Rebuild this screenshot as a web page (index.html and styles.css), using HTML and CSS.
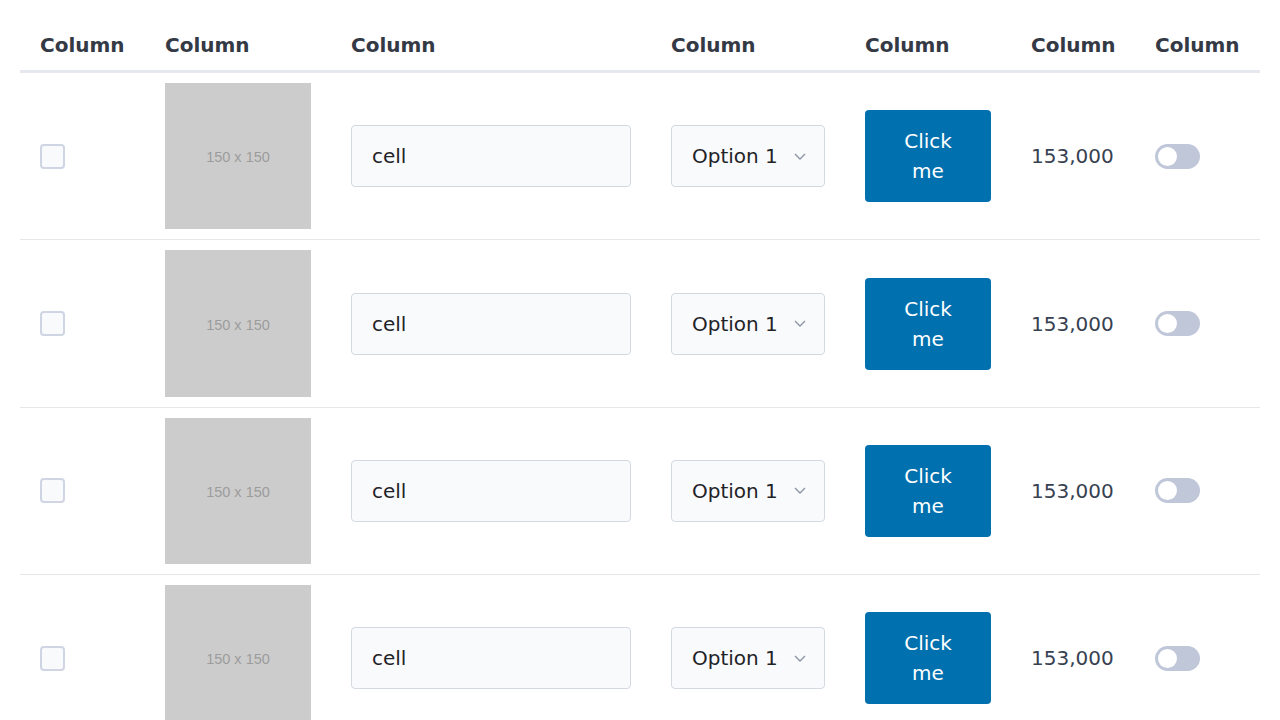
FILE: index.html
```html
<!DOCTYPE html>
<html lang="en">
<head>
<meta charset="utf-8">
<title>Table</title>
<link rel="stylesheet" href="styles.css">
</head>
<body>
<table class="grid">
  <colgroup>
    <col class="c1"><col class="c2"><col class="c3"><col class="c4"><col class="c5"><col class="c6"><col class="c7">
  </colgroup>
  <thead>
    <tr>
      <th>Column</th><th>Column</th><th>Column</th><th>Column</th><th>Column</th><th>Column</th><th>Column</th>
    </tr>
  </thead>
  <tbody>
    <tr>
      <td><span class="check"></span></td>
      <td><div class="thumb">150 x 150</div></td>
      <td><div class="input">cell</div></td>
      <td><div class="select"><span>Option 1</span><svg class="chev" width="12" height="7" viewBox="0 0 12 7"><path d="M1 1l5 5 5-5" fill="none" stroke="#8a93a6" stroke-width="1.3"/></svg></div></td>
      <td><div class="btn">Click me</div></td>
      <td class="num">153,000</td>
      <td><span class="toggle"><span class="knob"></span></span></td>
    </tr>
    <tr>
      <td><span class="check"></span></td>
      <td><div class="thumb">150 x 150</div></td>
      <td><div class="input">cell</div></td>
      <td><div class="select"><span>Option 1</span><svg class="chev" width="12" height="7" viewBox="0 0 12 7"><path d="M1 1l5 5 5-5" fill="none" stroke="#8a93a6" stroke-width="1.3"/></svg></div></td>
      <td><div class="btn">Click me</div></td>
      <td class="num">153,000</td>
      <td><span class="toggle"><span class="knob"></span></span></td>
    </tr>
    <tr>
      <td><span class="check"></span></td>
      <td><div class="thumb">150 x 150</div></td>
      <td><div class="input">cell</div></td>
      <td><div class="select"><span>Option 1</span><svg class="chev" width="12" height="7" viewBox="0 0 12 7"><path d="M1 1l5 5 5-5" fill="none" stroke="#8a93a6" stroke-width="1.3"/></svg></div></td>
      <td><div class="btn">Click me</div></td>
      <td class="num">153,000</td>
      <td><span class="toggle"><span class="knob"></span></span></td>
    </tr>
    <tr>
      <td><span class="check"></span></td>
      <td><div class="thumb">150 x 150</div></td>
      <td><div class="input">cell</div></td>
      <td><div class="select"><span>Option 1</span><svg class="chev" width="12" height="7" viewBox="0 0 12 7"><path d="M1 1l5 5 5-5" fill="none" stroke="#8a93a6" stroke-width="1.3"/></svg></div></td>
      <td><div class="btn">Click me</div></td>
      <td class="num">153,000</td>
      <td><span class="toggle"><span class="knob"></span></span></td>
    </tr>
  </tbody>
</table>
</body>
</html>
```
FILE: styles.css
```css
html, body {
  margin: 0;
  background: #ffffff;
}
body {
  padding: 20px;
  font-family: "DejaVu Sans", sans-serif;
  font-size: 20px;
  color: #374151;
}
.grid {
  width: 1240px;
  border-collapse: collapse;
  table-layout: fixed;
}
.c1 { width: 125px; }
.c2 { width: 186px; }
.c3 { width: 320px; }
.c4 { width: 194px; }
.c5 { width: 166px; }
.c6 { width: 124px; }
.c7 { width: 125px; }

th {
  text-align: left;
  font-weight: bold;
  line-height: 30px;
  padding: 10px 20px;
  color: #343a45;
  border-bottom: 3px solid #e6e8f0;
  white-space: nowrap;
}
td {
  padding: 10px 20px;
  vertical-align: middle;
  border-bottom: 1px solid #e5e7eb;
  line-height: 30px;
}
.check {
  display: block;
  width: 25px;
  height: 25px;
  box-sizing: border-box;
  border: 2px solid #cfd5e3;
  border-radius: 4px;
  background: #f9fafb;
}
.thumb {
  width: 146px;
  height: 146.4px;
  background: #cccccc;
  color: #9c9c9c;
  font-family: "Liberation Sans", Arial, sans-serif;
  font-size: 14.5px;
  line-height: 16px;
  padding-top: 2px;
  box-sizing: border-box;
  display: flex;
  align-items: center;
  justify-content: center;
}
.input {
  height: 62px;
  box-sizing: border-box;
  border: 1px solid #d3d8e3;
  border-radius: 4px;
  background: #f9fafb;
  padding: 0 20px;
  display: flex;
  align-items: center;
  color: #1f2328;
}
.select {
  height: 62px;
  box-sizing: border-box;
  border: 1px solid #d3d8e3;
  border-radius: 4px;
  background: #f9fafb;
  padding: 0 18px 0 20px;
  display: flex;
  align-items: center;
  justify-content: space-between;
  color: #1f2328;
}
.chev {
  display: block;
}
.btn {
  width: 126px;
  box-sizing: border-box;
  padding: 16px 24px;
  background: #0070ae;
  color: #ffffff;
  border-radius: 4px;
  text-align: center;
  line-height: 30px;
}
.num {
  color: #374151;
}
.toggle {
  display: block;
  width: 45px;
  height: 25px;
  border-radius: 13px;
  background: #c0c7d9;
  position: relative;
}
.knob {
  position: absolute;
  left: 3px;
  top: 3px;
  width: 19px;
  height: 19px;
  border-radius: 50%;
  background: #ffffff;
}
```
